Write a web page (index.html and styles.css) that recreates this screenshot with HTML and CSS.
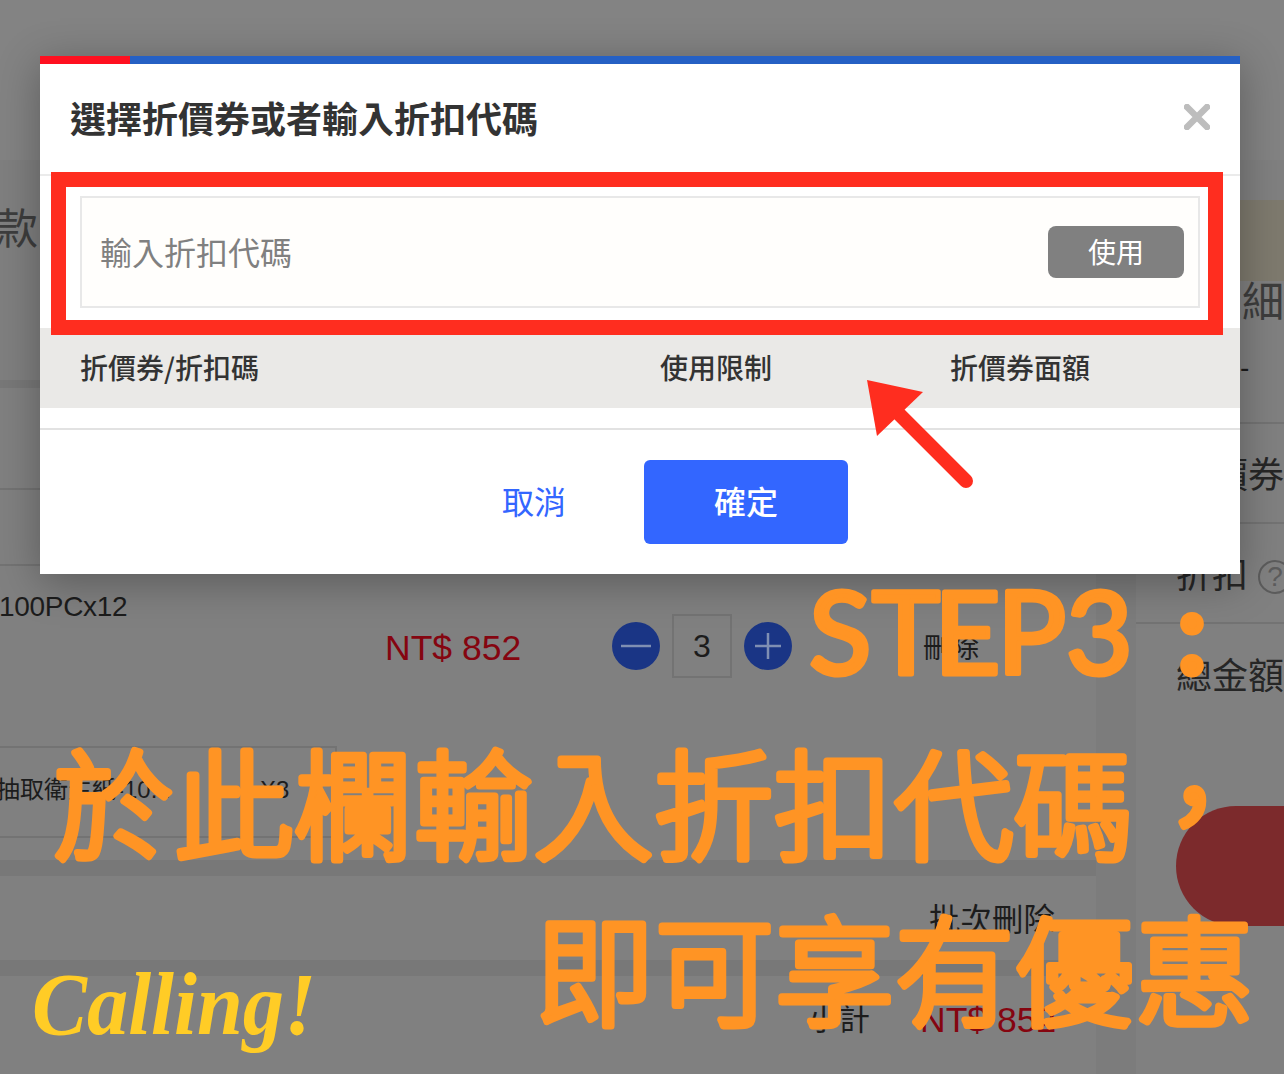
FILE: index.html
```html
<!DOCTYPE html>
<html lang="zh-Hant">
<head>
<meta charset="utf-8">
<title>選擇折價券</title>
<link rel="stylesheet" href="styles.css">
</head>
<body>
<div class="page">
  <div class="top-band"></div>
  <div class="columns">
    <main class="main">
      <section class="head-sec"><span class="pay-title">款:</span></section>
      <div class="gap gap-s"></div>
      <section class="card goods">
        <div class="line-row r1"></div>
        <div class="line-row r2"></div>
        <div class="prod-name">100PCx12</div>
        <div class="prod-row">
          <span class="price">NT$ 852</span>
          <div class="qty">
            <svg class="qbtn" viewBox="0 0 48 48"><circle cx="24" cy="24" r="24" fill="#1a3585"/><path d="M9 24h30" stroke="#7f8fb3" stroke-width="2.500"/></svg>
            <span class="qnum">3</span>
            <svg class="qbtn" viewBox="0 0 48 48"><circle cx="24" cy="24" r="24" fill="#1a3585"/><path d="M11 24h26M24 11v26" stroke="#7f8fb3" stroke-width="2.500"/></svg>
          </div>
          <span class="del">刪除</span>
        </div>
        <div class="gift"><span class="gift-name">抽取衛生紙-10...</span><span class="gift-x">X3</span></div>
      </section>
      <div class="gap"></div>
      <section class="card batch"><span class="batch-del">批次刪除</span></section>
      <div class="gap"></div>
      <section class="card total"><span class="sub">小計</span><span class="sub-price">NT$ 852</span></section>
    </main>
    <aside class="side">
      <div class="side-note"></div>
      <div class="side-title">明細</div>
      <div class="side-dash">-</div>
      <div class="side-row">折價券</div>
      <div class="side-row">折扣 <span class="help">?</span></div>
      <div class="side-row">總金額</div>
    </aside>
  </div>

  <div class="pill"></div>

  <div class="modal">
    <div class="bar"><div class="bar-red"></div></div>
    <header class="m-head">
      <h1 class="m-title">選擇折價券或者輸入折扣代碼</h1>
      <svg class="m-close" viewBox="0 0 26 26"><path d="M3 3l20 20M23 3L3 23" stroke="#bdbdbd" stroke-width="6.500" stroke-linecap="round"/></svg>
    </header>
    <div class="m-body">
      <div class="code-box">
        <span class="placeholder">輸入折扣代碼</span>
        <span class="use-btn">使用</span>
      </div>
    </div>
    <div class="t-head">
      <span class="c1">折價券/折扣碼</span>
      <span class="c2">使用限制</span>
      <span class="c3">折價券面額</span>
    </div>
    <div class="t-empty"></div>
    <footer class="m-foot">
      <span class="cancel">取消</span>
      <span class="ok">確定</span>
    </footer>
  </div>

  <svg class="annot" viewBox="0 0 1284 1074">
    <rect class="frame" x="58.500" y="179.500" width="1157" height="148"/>
    <path class="arrow-shaft" d="M897 412L966 481"/>
    <polygon class="arrow-head" points="867,380 923,392 877,436"/>
    <text class="big step" x="809 872 934 997 1066" y="674">STEP3</text>
    <text class="big colon" x="1148" y="677">：</text>
    <text class="big cjk" x="54" y="851">於此欄輸入折扣代碼，</text>
    <text class="big cjk" x="535" y="1017">即可享有優惠</text>
    <text class="calling" x="32" y="1034" textLength="284" lengthAdjust="spacingAndGlyphs">Calling!</text>
  </svg>
</div>
</body>
</html>
```
FILE: styles.css
```css
* { box-sizing: border-box; }
html, body { margin: 0; padding: 0; }
body {
  width: 1284px;
  height: 1074px;
  overflow: hidden;
  font-family: "Liberation Sans", "Noto Sans CJK TC", sans-serif;
  background: #808080;
}
.page {
  position: relative;
  width: 1284px;
  height: 1074px;
  overflow: hidden;
  background: #7c7c7c;
}
.top-band { height: 160px; background: #838383; }
.columns { display: flex; }
.main { width: 1096px; flex: none; }
.head-sec {
  height: 220px;
  background: #7f7f7f;
  padding: 42px 0 0;
  display: flex;
  align-items: flex-start;
}
.pay-title { font-size: 42px; line-height: 56px; color: #3d3d3d; margin-left: -4px; }
.gap { height: 16px; background: #787878; }
.gap-s { height: 8px; }
.card { background: #808080; }
.goods { height: 472px; display: flex; flex-direction: column; }
.line-row { border-bottom: 2px solid #737373; }
.r1 { height: 102px; }
.r2 { height: 76px; }
.prod-name { font-size: 28px; line-height: 32px; color: #1c1c1c; margin-top: 25px; margin-left: -1px; letter-spacing: -0.3px; }
.prod-row { display: flex; align-items: center; height: 64px; margin-top: -9px; padding-left: 385px; }
.price { font-size: 35.500px; color: #850510; width: 227px; flex: none; padding-top: 4px; }
.qty { display: flex; align-items: center; gap: 12px; width: 311px; flex: none; }
.qbtn { width: 48px; height: 48px; flex: none; }
.qnum {
  width: 60px; height: 64px; flex: none;
  border: 2px solid #737373;
  display: flex; align-items: center; justify-content: center;
  font-size: 32px; color: #1c1c1c;
}
.del { font-size: 28px; color: #1c1c1c; }
.gift {
  width: 337px; height: 92px; margin-top: 68px; flex: none;
  border: 2px solid #737373; border-left: 0;
  display: flex; align-items: flex-start; padding-top: 25px;
  font-size: 24px; line-height: 34px; color: #1c1c1c;
}
.gift-name { margin-left: -4px; width: 264px; flex: none; white-space: nowrap; }
.gift-x { font-size: 24px; }
.batch { height: 84px; display: flex; justify-content: flex-end; padding: 24px 41px 0 0; }
.batch-del { font-size: 31.500px; line-height: 40px; color: #1c1c1c; }
.total { height: 98px; display: flex; padding: 24px 0 0 808px; }
.sub { font-size: 31px; line-height: 40px; color: #1c1c1c; width: 112px; flex: none; }
.sub-price { font-size: 35.500px; line-height: 40px; color: #850510; }

.side { flex: none; width: 148px; margin-left: 40px; background: #808080; padding-top: 40px; }
.side-note { height: 81px; background: #7e7a6e; }
.side-title { height: 43px; padding-left: 64px; font-size: 42px; line-height: 44px; color: #3d3d3d; }
.side-dash { height: 100px; padding: 29px 0 0 104px; font-size: 28px; line-height: 30px; color: #1c1c1c; border-bottom: 2px solid #737373; }
.side-row {
  height: 100px;
  padding: 28px 0 0 40px;
  font-size: 36px;
  line-height: 48px;
  color: #262626;
  white-space: nowrap;
  border-bottom: 2px solid #737373;
}
.side-row:last-child { border-bottom: 0; padding-top: 29px; }
.help {
  display: inline-block; width: 34px; height: 34px; border: 2px solid #5c5c5c; border-radius: 50%;
  font-size: 28px; line-height: 30px; text-align: center; color: #5c5c5c; vertical-align: 2px;
}

.pill {
  position: absolute; left: 1176px; top: 806px; width: 200px; height: 120px;
  border-radius: 60px; background: #7c2a2c;
}

.modal {
  position: absolute; left: 40px; top: 56px; width: 1200px; height: 518px;
  background: #fff;
  box-shadow: 0 8px 40px rgba(0, 0, 0, 0.3);
  font-family: "Noto Sans CJK TC", sans-serif;
}
.bar { height: 8px; background: #2560c4; }
.bar-red { width: 90px; height: 8px; background: #ff1020; }
.m-head {
  height: 112px;
  padding: 0 30px;
  display: flex; align-items: center; justify-content: space-between;
  border-bottom: 2px solid #ebebeb;
}
.m-title { margin: -5px 0 0; font-size: 36px; font-weight: 700; color: #333; line-height: 48px; }
.m-close { width: 26px; height: 26px; margin-top: -4px; margin-right: 0; flex: none; }
.m-body { height: 152px; padding: 20px 40px; }
.code-box {
  height: 112px;
  border: 2px solid #e8e8e8;
  background: #fffefc;
  padding: 0 14px 0 18px;
  display: flex; align-items: center; justify-content: space-between;
}
.placeholder { font-size: 32px; color: #808080; padding-bottom: 3px; }
.use-btn {
  width: 136px; height: 52px; border-radius: 8px; background: #808080; color: #fff;
  font-size: 28px; display: flex; align-items: center; justify-content: center; padding-bottom: 2px;
}
.t-head {
  height: 80px; background: #eae9e7; display: flex; align-items: center;
  font-size: 28px; font-weight: 500; color: #333; padding-bottom: 3px;
}
.c1 { margin-left: 40px; width: 580px; flex: none; }
.c2 { width: 290px; flex: none; }
.t-empty { height: 20px; }
.m-foot {
  height: 146px;
  border-top: 2px solid #e2e2e2;
  padding: 30px 0 0 462px;
  display: flex; align-items: flex-start;
  font-size: 32px;
}
.cancel { color: #3366ff; line-height: 80px; width: 142px; flex: none; }
.ok {
  width: 204px; height: 84px; border-radius: 6px;
  background: #3366ff; color: #fff; font-weight: 500;
  display: flex; align-items: center; justify-content: center; padding-bottom: 4px;
}

.annot { position: absolute; left: 0; top: 0; width: 1284px; height: 1074px; }
.frame { fill: none; stroke: #ff2d1f; stroke-width: 15; }
.arrow-shaft { stroke: #ff2d1f; stroke-width: 14; stroke-linecap: round; fill: none; }
.arrow-head { fill: #ff2d1f; }
.big {
  fill: #ff9424; stroke: #ff9424; stroke-linejoin: round; stroke-linecap: round;
}
.cjk { font-family: "Noto Sans CJK TC", sans-serif; font-size: 119px; font-weight: 300; stroke-width: 7px; letter-spacing: 1px; }
.step { font-family: "Lato", sans-serif; font-size: 115px; font-weight: 400; stroke-width: 5px; }
.colon { font-family: "Noto Sans CJK TC", sans-serif; font-size: 88px; font-weight: 700; stroke-width: 7px; }
.calling { font-family: "Liberation Serif", serif; font-style: italic; font-weight: 700; font-size: 88px; fill: #ffcc26; }
```
